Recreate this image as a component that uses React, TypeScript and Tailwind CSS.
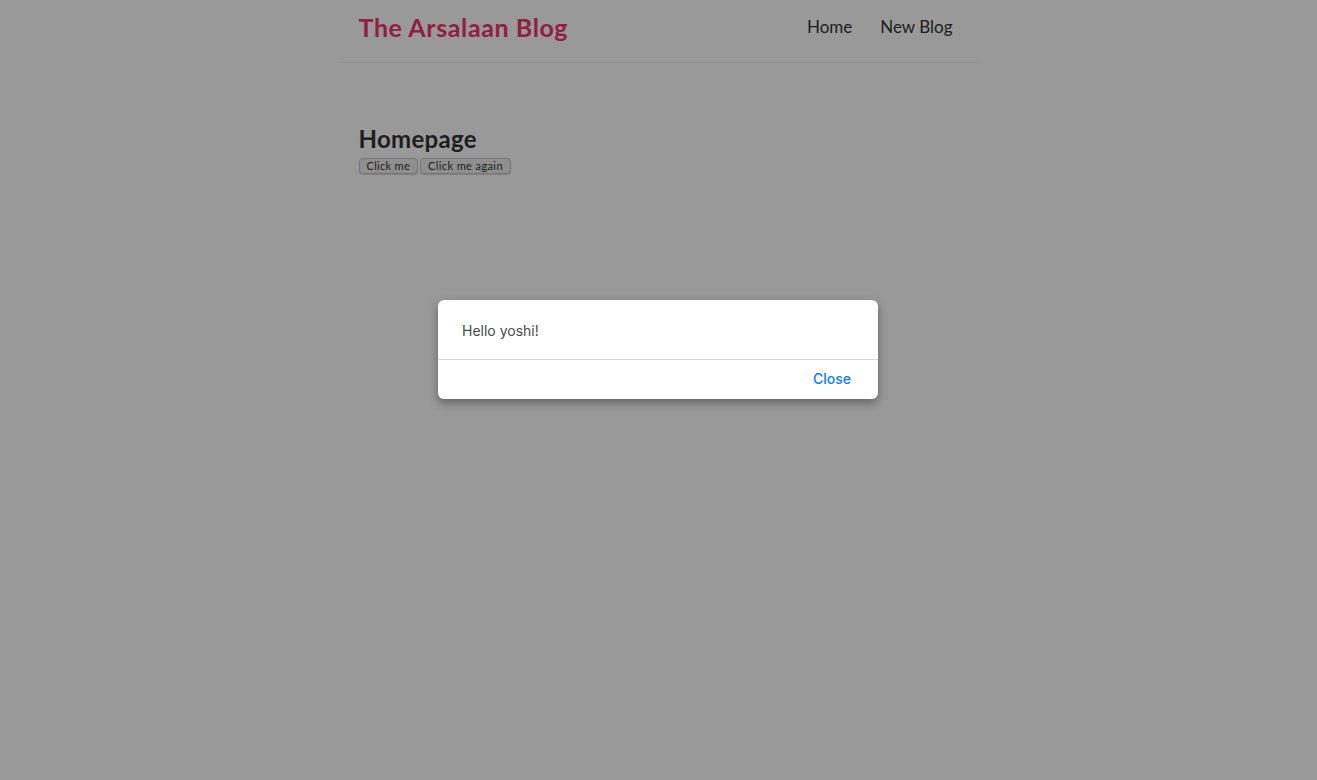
import React from "react";

export default function App() {
  return (
    <div className="relative min-h-[780px] w-full bg-white" style={{ fontFamily: "Lato, 'Noto Sans', sans-serif" }}>
      <nav className="mx-auto box-content flex max-w-[600px] items-center border-b border-[#f2f2f2] px-5 pb-6 pt-4">
        <h1 className="text-[25px] font-bold leading-[22px] text-[#f1356d] tracking-[0.6px]">The Arsalaan Blog</h1>
        <div className="ml-auto flex text-[17px] leading-[22px] text-[#333]">
          <a className="ml-4 px-1.5">Home</a>
          <a className="ml-4 px-1.5">New Blog</a>
        </div>
      </nav>
      <div className="mx-auto mt-10 box-content max-w-[600px] p-5">
        <h2 className="text-[24px] font-bold leading-[32px] text-[#333] tracking-[0.3px]">Homepage</h2>
        <div className="mt-[3px] flex gap-[2px]">
          <button className="h-[16px] rounded-[4px] border border-[#c4c4c4] bg-[#efefef] px-[7px] text-[11px] leading-[14px] tracking-[0.3px] text-[#333] shadow-[0_1px_1px_rgba(0,0,0,0.15)]">Click me</button>
          <button className="h-[16px] rounded-[4px] border border-[#c4c4c4] bg-[#efefef] px-[7px] text-[11px] leading-[14px] tracking-[0.4px] text-[#333] shadow-[0_1px_1px_rgba(0,0,0,0.15)]">Click me again</button>
        </div>
      </div>
      <div className="absolute inset-0 bg-black/40" />
      <div className="absolute left-[438px] top-[300px] w-[440px] overflow-hidden rounded-[6px] bg-white shadow-[0_4px_10px_rgba(0,0,0,0.35)]" style={{ fontFamily: "Inter, 'Liberation Sans', sans-serif" }}>
        <div className="px-6 pb-[19px] pt-[22px] text-[14px] leading-[18px] text-[#4a4a4a]">Hello yoshi!</div>
        <div className="h-px bg-[#d6d6d6]" />
        <div className="flex h-[39px] items-center justify-end pr-[27px] pb-[2px]">
          <span className="text-[14px] font-medium text-[#0a7cff]">Close</span>
        </div>
      </div>
    </div>
  );
}
